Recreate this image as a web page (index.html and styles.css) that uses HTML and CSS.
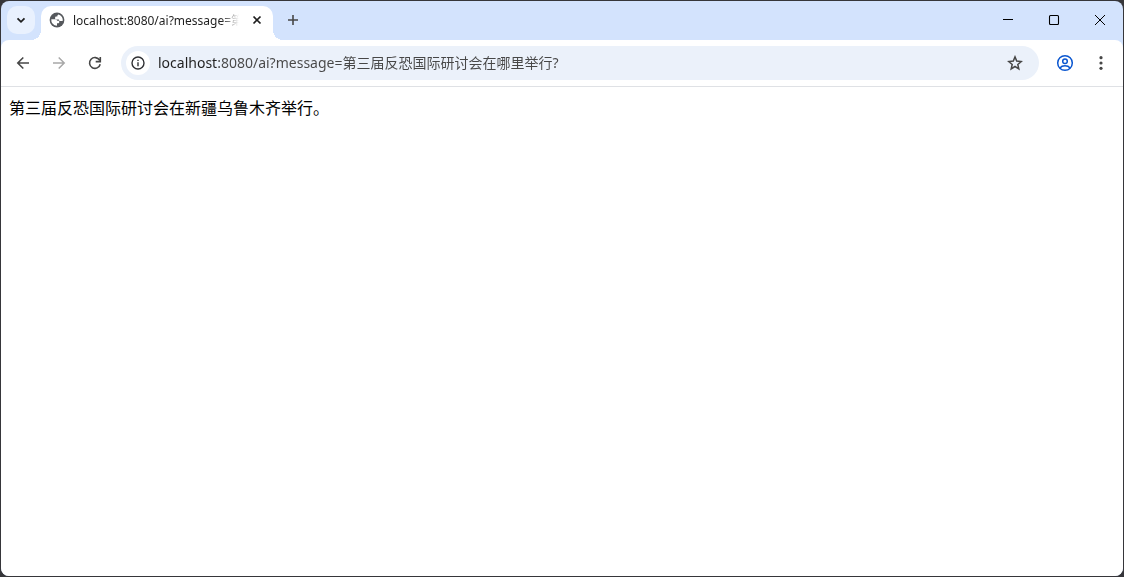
FILE: index.html
```html
<!DOCTYPE html>
<html lang="zh-CN">
<head>
    <meta charset="UTF-8">
    <meta name="viewport" content="width=device-width, initial-scale=1.0">
    <title>localhost:8080/ai</title>
    <link rel="stylesheet" href="styles.css">
</head>
<body>

    <div class="window">
        <header class="tab-strip">
            <button class="tab-search" aria-label="Search tabs">
                <svg width="16" height="16" viewBox="0 0 16 16"><path d="M4.5 6.3 8 9.8l3.5-3.5" fill="none" stroke="#1f1f1f" stroke-width="1.8"/></svg>
            </button>

            <div class="tab">
                <svg class="favicon" width="16" height="16" viewBox="0 0 16 16">
                    <circle cx="8" cy="8" r="7.4" fill="#55585c"/>
                    <path d="M2.300 7.300h4.200c1 0 1.500.6 1.500 1.500h1.200c.7 0 1.100.5 1.100 1.200s-.5 1.300-1.300 1.300H8v2.500A5.800 5.800 0 0 1 2.300 7.300z" fill="#fff"/>
                    <path d="M9.600 2.400a5.800 5.800 0 0 1 4.100 6.600h-2.600c-.8 0-1.200-.6-1.200-1.500H7.300c-.8 0-1.200-.5-1.200-1.200V5.700c0-.8.5-1.200 1.300-1.200h.9c0-1.300.4-1.900 1.300-2.100z" fill="#fff"/>
                </svg>
                <span class="tab-title">localhost:8080/ai?message=第三届</span>
                <button class="tab-close" aria-label="Close tab">
                    <svg width="16" height="16" viewBox="0 0 16 16"><path d="m4.500 4.500 7 7m0-7-7 7" stroke="#1f1f1f" stroke-width="1.7"/></svg>
                </button>
            </div>

            <button class="new-tab" aria-label="New tab">
                <svg width="16" height="16" viewBox="0 0 16 16"><path d="M8 3v10M3 8h10" stroke="#474747" stroke-width="1.6"/></svg>
            </button>

            <div class="window-controls">
                <button aria-label="Minimize">
                    <svg width="12" height="12" viewBox="0 0 12 12"><path d="M1 5.5h10" stroke="#000"/></svg>
                </button>
                <button aria-label="Maximize">
                    <svg width="12" height="12" viewBox="0 0 12 12"><rect x="1.5" y="1.5" width="9" height="9" rx="1" fill="none" stroke="#000" stroke-width="1.1"/></svg>
                </button>
                <button aria-label="Close">
                    <svg width="12" height="12" viewBox="0 0 12 12"><path d="m1 1 10 10M11 1 1 11" stroke="#000"/></svg>
                </button>
            </div>
        </header>

        <nav class="toolbar">
            <button class="tool" aria-label="Back">
                <svg width="16" height="16" viewBox="0 0 16 16"><path d="M14 8H3m5.3-5.5L2.8 8l5.5 5.5" fill="none" stroke="#474747" stroke-width="1.6"/></svg>
            </button>
            <button class="tool" aria-label="Forward" disabled>
                <svg width="16" height="16" viewBox="0 0 16 16"><path d="M2 8h11M7.7 2.5 13.2 8l-5.5 5.5" fill="none" stroke="#a8a8a8" stroke-width="1.5"/></svg>
            </button>
            <button class="tool" aria-label="Reload">
                <svg width="16" height="16" viewBox="0 0 16 16"><path d="M13.2 9.2A5.4 5.4 0 1 1 12.6 5.2M13.3 2v4.6H8.7" fill="none" stroke="#474747" stroke-width="1.6"/></svg>
            </button>

            <div class="address-bar">
                <button class="site-info" aria-label="View site information">
                    <svg width="16" height="16" viewBox="0 0 16 16"><circle cx="8" cy="8" r="6" fill="none" stroke="#303134" stroke-width="1.4"/><path d="M8 7.2v4M8 4.7v1.4" stroke="#303134" stroke-width="1.4"/></svg>
                </button>
                <input class="address" type="text" aria-label="Address" spellcheck="false" value="localhost:8080/ai?message=第三届反恐国际研讨会在哪里举行?">
                <button class="bookmark" aria-label="Bookmark this tab">
                    <svg width="16" height="16" viewBox="0 0 16 16"><path d="m8 1.9 1.7 4.2 4.5.4-3.4 3 1 4.4L8 11.5l-3.8 2.4 1-4.4-3.4-3 4.5-.4z" fill="none" stroke="#474747" stroke-width="1.5"/></svg>
                </button>
            </div>

            <button class="tool profile" aria-label="Profile">
                <svg width="18" height="18" viewBox="0 0 18 18" fill="none" stroke="#0b57d0" stroke-width="1.5"><circle cx="9" cy="9" r="7.3"/><circle cx="9" cy="7.2" r="2.3"/><path d="M3.9 14c1.2-1.5 3-2.2 5.1-2.2s3.9.7 5.1 2.2"/></svg>
            </button>
            <button class="tool" aria-label="Menu">
                <svg width="16" height="16" viewBox="0 0 16 16" fill="#474747"><circle cx="8" cy="2.7" r="1.6"/><circle cx="8" cy="8" r="1.6"/><circle cx="8" cy="13.3" r="1.6"/></svg>
            </button>
        </nav>

        <main class="page">第三届反恐国际研讨会在新疆乌鲁木齐举行。</main>
    </div>

</body>
</html>
```
FILE: styles.css
```css
* {
    margin: 0;
    padding: 0;
    box-sizing: border-box;
}

body {
    min-height: 100vh;
    display: flex;
    padding: 1px;
    background-color: #36363a;
    font-family: "Noto Sans", "Noto Sans CJK SC", sans-serif;
}

button {
    display: flex;
    justify-content: center;
    align-items: center;
    flex: none;
    border: none;
    background: none;
}

svg {
    display: block;
    flex: none;
}

.window {
    flex: 1;
    display: flex;
    flex-direction: column;
    min-width: 0;
    border-radius: 8px;
    overflow: hidden;
    background-color: #d3e3fd;
}

.tab-strip {
    display: flex;
    height: 39px;
    padding: 5px 0 0 6px;
}

.tab-search {
    width: 28px;
    height: 28px;
    border-radius: 10px;
    background-color: #e9f1fe;
}

.tab {
    position: relative;
    display: flex;
    align-items: center;
    flex: 0 1 232px;
    min-width: 0;
    height: 34px;
    margin-left: 6px;
    padding: 0 8px 6px;
    border-radius: 10px 10px 0 0;
    background-color: white;
}

/* curved feet on both sides of the active tab */
.tab::before,
.tab::after {
    content: "";
    position: absolute;
    bottom: 0;
    width: 10px;
    height: 10px;
}

.tab::before {
    right: 100%;
    background: radial-gradient(circle at 0 0, transparent 10px, white 10px);
}

.tab::after {
    left: 100%;
    background: radial-gradient(circle at 100% 0, transparent 10px, white 10px);
}

.tab-title {
    flex: 1;
    margin: 0 8px;
    overflow: hidden;
    white-space: nowrap;
    font-size: 12px;
    color: #1f1f1f;
    -webkit-mask-image: linear-gradient(to left, transparent 2px, black 20px);
    mask-image: linear-gradient(to left, transparent 2px, black 20px);
}

.tab-close {
    width: 16px;
    height: 16px;
}

.new-tab {
    width: 28px;
    height: 28px;
    margin-left: 6px;
}

.window-controls {
    display: flex;
    margin-left: auto;
}

.window-controls button {
    width: 46px;
    height: 28px;
}

.toolbar {
    display: flex;
    align-items: center;
    height: 47px;
    padding: 0 5px;
    border-bottom: 1px solid #dfe1e5;
    border-radius: 8px 8px 0 0;
    background-color: white;
}

.tool {
    width: 34px;
    height: 34px;
    margin-right: 2px;
}

.tool:last-child {
    margin-right: 0;
}

.address-bar {
    flex: 1;
    display: flex;
    align-items: center;
    min-width: 0;
    height: 34px;
    margin-left: 7px;
    padding: 0 12px 0 5px;
    border-radius: 17px;
    background-color: #ebf1fa;
}

.site-info {
    width: 24px;
    height: 24px;
    border-radius: 50%;
    background-color: white;
}

/* the host part of the address is darker than the rest */
.address {
    flex: 1;
    min-width: 0;
    height: 24px;
    margin: 0 8px;
    padding-bottom: 2px;
    border: none;
    outline: none;
    font-family: inherit;
    font-size: 14px;
    color: transparent;
    background: linear-gradient(to right, #1f1f1f 60px, #474747 60px);
    -webkit-background-clip: text;
    background-clip: text;
}

.bookmark {
    width: 24px;
    height: 24px;
}

.profile {
    margin-left: 9px;
}

.page {
    flex: 1;
    padding: 8px;
    background-color: white;
    font-size: 16px;
    line-height: 26px;
    color: black;
}
```
